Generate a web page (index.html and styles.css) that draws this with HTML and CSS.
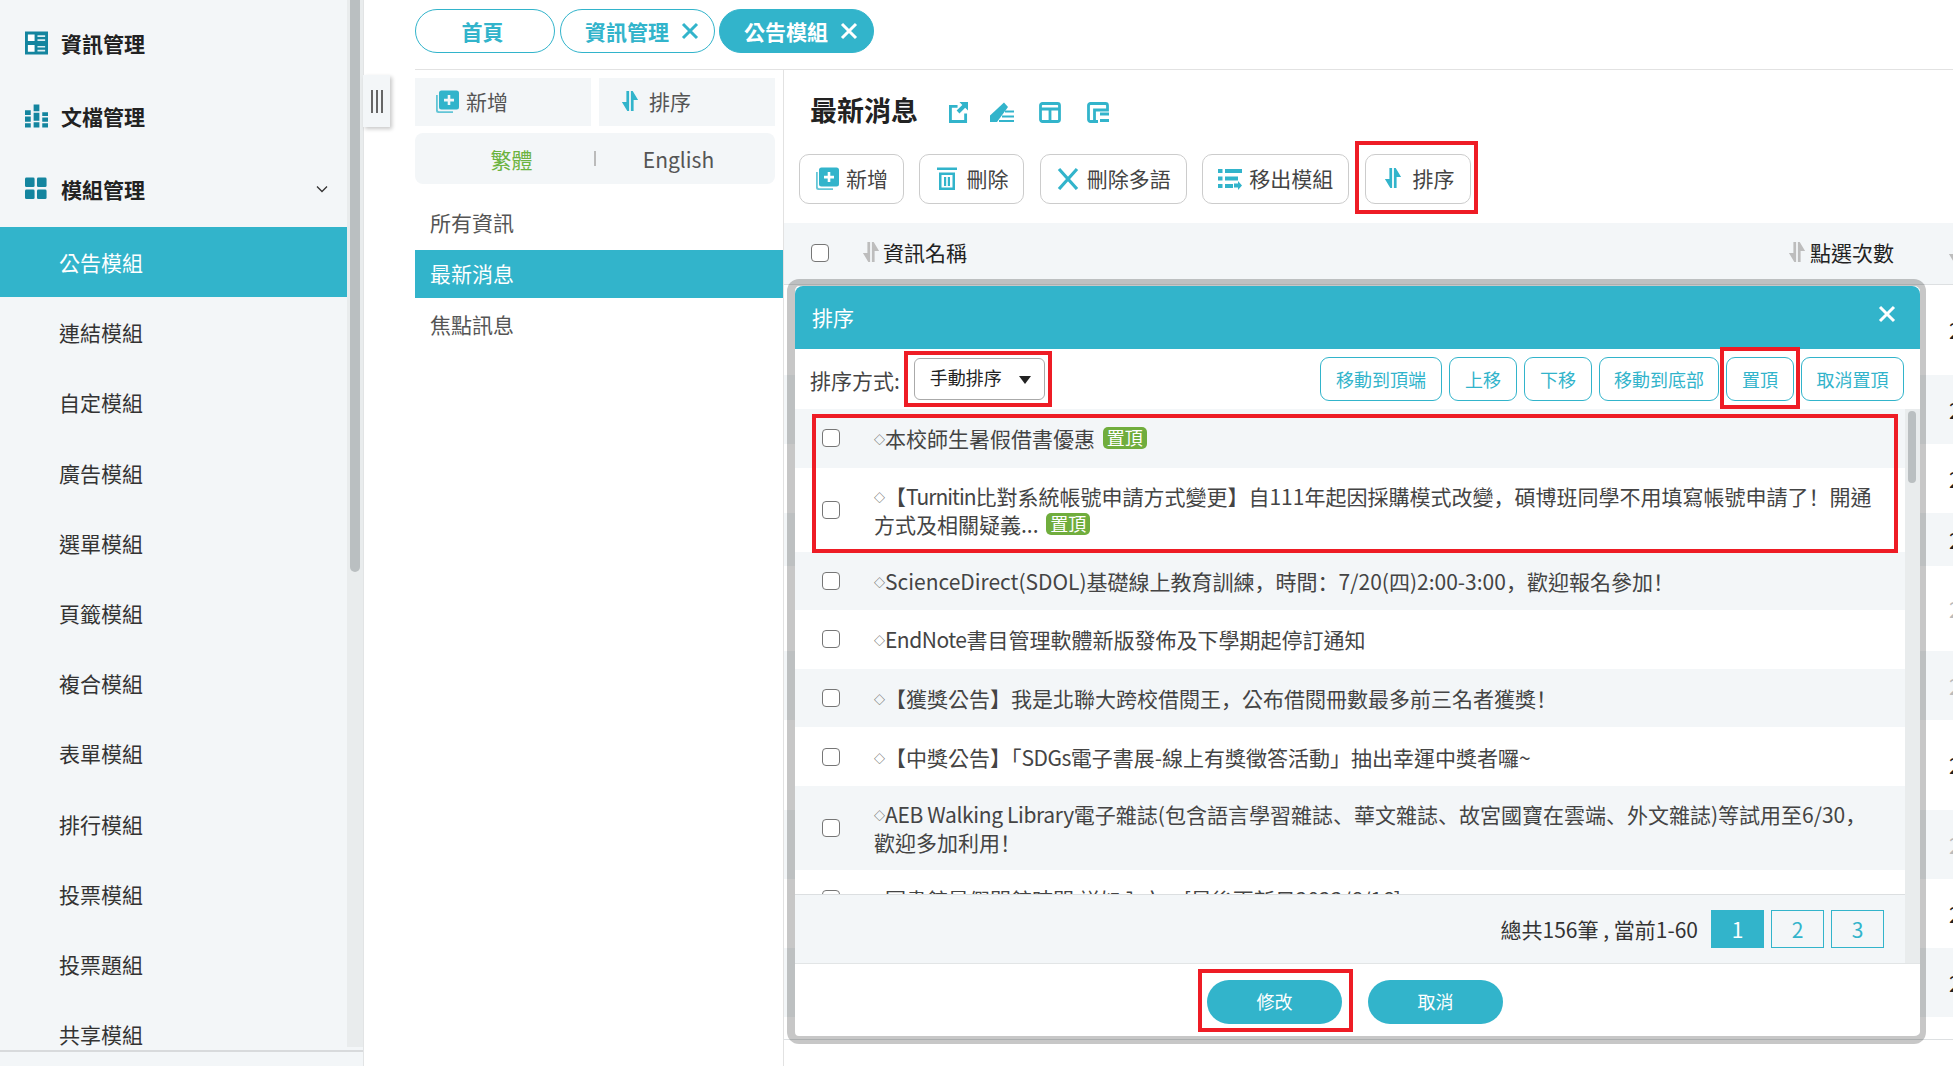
FILE: index.html
```html
<!DOCTYPE html>
<html lang="zh-Hant">

<head>
  <meta charset="UTF-8">
  <meta name="viewport" content="width=device-width, initial-scale=1.0">
  <title>最新消息</title>
  <link rel="stylesheet" href="styles.css">
</head>

<body>
  <svg class="defs" aria-hidden="true">
    <symbol id="i-sort" viewBox="0 0 20 24">
      <path d="M6 1h3v22H7L1 13h5zM11 1h2l6 10h-5v12h-3z" fill="currentColor" />
    </symbol>
    <symbol id="i-add" viewBox="0 0 24 24">
      <path d="M1 6v15.500A2.500 2.500 0 0 0 3.500 24H18v-1.800H4.200A1.400 1.400 0 0 1 2.800 21V6z" fill="currentColor" opacity=".75" />
      <path d="M6.500 1.500h15A2.500 2.500 0 0 1 24 4v14a2.500 2.500 0 0 1-2.500 2.500h-15A2.500 2.500 0 0 1 4 18V4a2.500 2.500 0 0 1 2.500-2.500zM12.700 6v3.800H9v2.600h3.700V16h2.600v-3.600H19V9.800h-3.700V6z" fill="currentColor" fill-rule="evenodd" />
    </symbol>
    <symbol id="i-x" viewBox="0 0 20 20">
      <path d="M3 3l14 14M17 3L3 17" fill="none" stroke="currentColor" stroke-width="3" />
    </symbol>
  </svg>

  <aside class="sidebar">
    <div class="side-body">
      <nav class="side-nav">
        <a class="side-top">
          <svg class="side-icon" viewBox="0 0 24 24"><path d="M0 0h24v24H0z" fill="#14859f" /><path d="M3 3h7v7H3zM3 14h7v7H3z" fill="#fff" /><path d="M13 4h8v1.800h-8zM13 8h8v1.800h-8zM13 15h8v1.800h-8zM13 19h8v1.800h-8z" fill="#dbeef2" /></svg>
          資訊管理
        </a>
        <a class="side-top">
          <svg class="side-icon" viewBox="0 0 24 24"><path d="M0 6h6v5H0zM0 12.500h6V18H0zM0 19.500h6V24H0zM9 0h6v7H9zM9 8.500h6V17H9zM9 18.500h6V24H9zM18 8h6v4h-6zM18 13.500h6V18h-6zM18 19.500h6V24h-6z" fill="#14859f" /></svg>
          文檔管理
        </a>
        <a class="side-top">
          <svg class="side-icon" viewBox="0 0 24 24"><rect x="0" y="0" width="10" height="10" rx="1.500" fill="#14859f" /><rect x="12.500" y="0" width="10" height="10" rx="1.500" fill="#14859f" /><rect x="0" y="12.500" width="10" height="10" rx="1.500" fill="#14859f" /><rect x="12.500" y="12.500" width="10" height="10" rx="1.500" fill="#14859f" /></svg>
          模組管理
          <svg class="chevron" viewBox="0 0 12 8"><path d="M1 1.500l5 5 5-5" fill="none" stroke="#333" stroke-width="1.300" /></svg>
        </a>
        <a class="side-sub active">公告模組</a>
        <a class="side-sub">連結模組</a>
        <a class="side-sub">自定模組</a>
        <a class="side-sub">廣告模組</a>
        <a class="side-sub">選單模組</a>
        <a class="side-sub">頁籤模組</a>
        <a class="side-sub">複合模組</a>
        <a class="side-sub">表單模組</a>
        <a class="side-sub">排行模組</a>
        <a class="side-sub">投票模組</a>
        <a class="side-sub">投票題組</a>
        <a class="side-sub">共享模組</a>
      </nav>
      <div class="side-track"><div class="side-thumb"></div></div>
    </div>
    <div class="side-foot"></div>
  </aside>

  <div class="collapse-handle"><span></span><span></span><span></span></div>

  <div class="content">
    <div class="tabs">
      <a class="tab tab-home">首頁</a>
      <a class="tab">資訊管理<svg class="tab-x"><use href="#i-x" /></svg></a>
      <a class="tab current">公告模組<svg class="tab-x"><use href="#i-x" /></svg></a>
    </div>

    <div class="work">
      <section class="left-panel">
        <div class="panel-actions">
          <a class="panel-btn"><svg class="ic"><use href="#i-add" /></svg>新增</a>
          <a class="panel-btn"><svg class="ic-sort"><use href="#i-sort" /></svg>排序</a>
        </div>
        <div class="lang-row">
          <a class="lang on">繁體</a>
          <i class="lang-sep"></i>
          <a class="lang">English</a>
        </div>
        <ul class="cat-list">
          <li>所有資訊</li>
          <li class="active">最新消息</li>
          <li>焦點訊息</li>
        </ul>
      </section>

      <main class="main">
        <div class="title-row">
          <h1>最新消息</h1>
          <svg class="title-icon ti-1" viewBox="0 0 20 22"><path d="M0 3h9v3H3v13h13v-7h3v10H0z" fill="#32b4cb" /><path d="M11 0h9v9l-3-3-6 6-3-3 6-6z" fill="#32b4cb" /></svg>
          <svg class="title-icon ti-2" viewBox="0 0 24 21"><path d="M14 .5L18 5 7 20H0v-6.500z" fill="#32b4cb" /><path d="M15 8.500h9v2h-9zM12 13.500h12v2H12zM9 18h15v2H9z" fill="#32b4cb" /></svg>
          <svg class="title-icon ti-3" viewBox="0 0 22 21"><rect x="1.500" y="1.500" width="19" height="18" rx="2" fill="none" stroke="#32b4cb" stroke-width="2.800" /><path d="M2 7h18M11 7v12" fill="none" stroke="#32b4cb" stroke-width="2.800" /></svg>
          <svg class="title-icon ti-4" viewBox="0 0 22 21"><path d="M11 19.500H3.500a2 2 0 0 1-2-2v-14a2 2 0 0 1 2-2h15a2 2 0 0 1 2 2V8H7.500v11.500" fill="none" stroke="#32b4cb" stroke-width="2.800" /><path d="M13 12h9M13 18.500h9" fill="none" stroke="#32b4cb" stroke-width="2.800" /></svg>
        </div>

        <div class="toolbar">
          <a class="tool-btn"><svg class="ic"><use href="#i-add" /></svg>新增</a>
          <a class="tool-btn">
            <svg class="ic" viewBox="0 0 24 24"><path d="M2 1.500h20v2.500H2zM4 6.500h16V24H4zM6.500 9v12.500h11V9zM9 11h2.200v9H9zM12.800 11H15v9h-2.200z" fill="#32b4cb" fill-rule="evenodd" /></svg>
            刪除
          </a>
          <a class="tool-btn"><svg class="ic" viewBox="0 0 24 24"><path d="M3 3l18 20M21 3L3 23" fill="none" stroke="#32b4cb" stroke-width="3.200" /></svg>刪除多語</a>
          <a class="tool-btn">
            <svg class="ic" viewBox="0 0 24 24"><path d="M0 3h4.500v4H0zM7 3h17v4H7zM0 10.500h4.500v4H0zM7 10.500h13v4H7zM0 18h4.500v4H0zM7 18h8v4H7z" fill="#32b4cb" /><path d="M16 17.500h4V15l4 4.500-4 4.500v-2.500h-4z" fill="#32b4cb" /></svg>
            移出模組
          </a>
          <a class="tool-btn"><svg class="ic-sort"><use href="#i-sort" /></svg>排序</a>
        </div>

        <div class="table-head">
          <input type="checkbox" class="check">
          <span class="th-name"><svg class="th-sort"><use href="#i-sort" /></svg>資訊名稱</span>
          <span class="th-click"><svg class="th-sort"><use href="#i-sort" /></svg>點選次數</span>
          <svg class="th-sort th-last"><use href="#i-sort" /></svg>
        </div>
        <div class="bg-row tall">2023/6/16</div>
        <div class="bg-row even">2023/6/16</div>
        <div class="bg-row">2023/6/16</div>
        <div class="bg-row even short">2023/6/16</div>
        <div class="bg-row mid pale">2023/6/16</div>
        <div class="bg-row even pale">2023/6/16</div>
        <div class="bg-row tall">2023/6/16</div>
        <div class="bg-row even pale">2023/6/16</div>
        <div class="bg-row">2023/6/16</div>
        <div class="bg-row even">2023/6/16</div>
        <div class="bg-row last"></div>

        <div class="modal">
          <div class="modal-head">
            <span class="modal-title">排序</span>
            <svg class="modal-close"><use href="#i-x" /></svg>
          </div>
          <div class="modal-tools">
            <label class="order-label">排序方式:</label>
            <div class="order-select">手動排序<i class="caret"></i></div>
            <div class="move-btns">
              <a class="move-btn w-122">移動到頂端</a>
              <a class="move-btn w-68">上移</a>
              <a class="move-btn w-68">下移</a>
              <a class="move-btn w-120">移動到底部</a>
              <a class="move-btn w-68">置頂</a>
              <a class="move-btn w-103">取消置頂</a>
            </div>
          </div>

          <div class="modal-body">
            <div class="list-wrap">
              <div class="sort-list">
                <div class="sort-row">
                  <input type="checkbox" class="check">
                  <p><span class="dia">◇</span>本校師生暑假借書優惠 <b class="pin">置頂</b></p>
                </div>
                <div class="sort-row">
                  <input type="checkbox" class="check">
                  <p><span class="dia">◇</span>【<span class="tight-1">Turnitin</span>比對系統帳號申請方式變更】自111年起因採購模式改變<span class="punct" lang="zh-Hans">，</span>碩博班同學不用填寫帳號申請了<span class="punct" lang="zh-Hans">！</span>開通方式及相關疑義... <b class="pin">置頂</b></p>
                </div>
                <div class="sort-row">
                  <input type="checkbox" class="check">
                  <p><span class="dia">◇</span>ScienceDirect(SDOL)基礎線上教育訓練<span class="punct" lang="zh-Hans">，</span>時間<span class="punct" lang="zh-Hans">：</span>7/20(四)2:00-3:00<span class="punct" lang="zh-Hans">，</span>歡迎報名參加<span class="punct" lang="zh-Hans">！</span></p>
                </div>
                <div class="sort-row">
                  <input type="checkbox" class="check">
                  <p><span class="dia">◇</span><span class="tight-2">EndNote</span>書目管理軟體新版發佈及下學期起停訂通知</p>
                </div>
                <div class="sort-row">
                  <input type="checkbox" class="check">
                  <p><span class="dia">◇</span>【獲獎公告】我是北聯大跨校借閱王<span class="punct" lang="zh-Hans">，</span>公布借閱冊數最多前三名者獲獎<span class="punct" lang="zh-Hans">！</span></p>
                </div>
                <div class="sort-row">
                  <input type="checkbox" class="check">
                  <p><span class="dia">◇</span>【中獎公告】「<span class="tight-2">SDGs</span>電子書展-線上有獎徵答活動」抽出幸運中獎者囉~</p>
                </div>
                <div class="sort-row">
                  <input type="checkbox" class="check">
                  <p><span class="dia">◇</span><span class="tight-3">AEB Walking Library</span>電子雜誌(包含語言學習雜誌<span class="punct" lang="zh-Hans">、</span>華文雜誌<span class="punct" lang="zh-Hans">、</span>故宮國寶在雲端<span class="punct" lang="zh-Hans">、</span>外文雜誌)等試用至6/30<span class="punct" lang="zh-Hans">，</span>歡迎多加利用<span class="punct" lang="zh-Hans">！</span></p>
                </div>
                <div class="sort-row">
                  <input type="checkbox" class="check">
                  <p><span class="dia">◇</span>圖書館暑假開館時間 詳如內文。[最後更新日2023/6/16]</p>
                </div>
              </div>
              <div class="pager">
                <span class="pager-text">總共156筆 , 當前1-60</span>
                <a class="page on">1</a>
                <a class="page">2</a>
                <a class="page">3</a>
              </div>
            </div>
            <div class="list-track"><div class="list-thumb"></div></div>
          </div>

          <div class="modal-foot">
            <a class="pill-btn">修改</a>
            <a class="pill-btn">取消</a>
          </div>
        </div>
      </main>
    </div>
  </div>

  <!-- red boxes drawn on top of the screenshot -->
  <div class="mark mark-sort"></div>
  <div class="mark mark-select"></div>
  <div class="mark mark-pin"></div>
  <div class="mark mark-rows"></div>
  <div class="mark mark-save"></div>
</body>

</html>
```
FILE: styles.css
```css
* {
  box-sizing: border-box;
}

html,
body {
  margin: 0;
  padding: 0;
  height: 1066px;
  overflow: hidden;
}

body {
  position: relative;
  display: flex;
  background-color: #fff;
  color: #333;
  font-family: "Noto Sans CJK TC", "Noto Sans", sans-serif;
  font-size: 21px;
}

.defs {
  position: absolute;
  width: 0;
  height: 0;
}

/* sidebar */
.sidebar {
  width: 364px;
  flex-shrink: 0;
  background-color: #f3f6f8;
  border-right: 1px solid #e2e4e5;
}

.side-body {
  display: flex;
  height: 1047px;
}

.side-nav {
  width: 347px;
  padding-top: 6px;
  overflow: hidden;
}

.side-top {
  display: flex;
  align-items: center;
  height: 73px;
  padding-left: 25px;
  font-weight: bold;
  color: #222;
}

.side-top:nth-child(3) {
  margin-bottom: 2px;
}

.side-icon {
  width: 23px;
  height: 24px;
  margin-right: 13px;
}

.chevron {
  width: 12px;
  height: 8px;
  margin-left: auto;
  margin-right: 19px;
}

.side-sub {
  display: flex;
  align-items: center;
  height: 70.2px;
  padding-left: 59px;
  color: #333;
}

.side-sub.active {
  background-color: #32b4cb;
  color: #fff;
}

.side-track {
  width: 16px;
  background-color: #e9eced;
  padding: 0 3px;
}

.side-thumb {
  width: 10px;
  height: 572px;
  background-color: #babfc1;
  border-radius: 0 0 5px 5px;
}

.side-foot {
  height: 2px;
  margin-top: 3px;
  background-color: #d8dadc;
}

.collapse-handle {
  position: absolute;
  left: 363px;
  top: 75px;
  width: 27px;
  height: 52px;
  display: flex;
  justify-content: center;
  align-items: center;
  gap: 3px;
  background-color: #f3f6f8;
  box-shadow: 2px 2px 4px rgba(0, 0, 0, 0.22);
}

.collapse-handle span {
  width: 2px;
  height: 23px;
  background-color: #666;
}

/* tabs */
.content {
  flex: 1;
  min-width: 0;
  padding-left: 51px;
}

.tabs {
  display: flex;
  gap: 5px;
  height: 70px;
  padding-top: 9px;
  border-bottom: 1px solid #e2e2e2;
}

.tab {
  display: flex;
  align-items: center;
  gap: 11px;
  width: 155px;
  height: 44px;
  padding-left: 24px;
  border: 1px solid #32b4cb;
  border-radius: 22px;
  color: #32b4cb;
  font-weight: bold;
}

.tab.current {
  margin-left: -1px;
}

.tab-home {
  width: 140px;
  justify-content: center;
  padding-left: 0;
  padding-right: 5px;
}

.tab.current {
  background-color: #32b4cb;
  color: #fff;
}

.tab-x {
  width: 20px;
  height: 20px;
}

/* left panel */
.work {
  display: flex;
  height: 996px;
}

.left-panel {
  width: 369px;
  flex-shrink: 0;
  padding-top: 8px;
  border-right: 1px solid #e2e2e2;
}

.panel-actions {
  display: flex;
  gap: 8px;
  width: 360px;
}

.panel-btn {
  display: flex;
  align-items: center;
  gap: 7px;
  flex: 1;
  height: 48px;
  padding: 0 0 2px 20px;
  background-color: #f3f6f8;
  color: #555;
}

.panel-btn .ic-sort {
  margin: 0 3px 0 2px;
}

.ic {
  width: 24px;
  height: 24px;
  flex-shrink: 0;
  color: #32b4cb;
}

.ic-sort {
  width: 18px;
  height: 22px;
  flex-shrink: 0;
  color: #32b4cb;
}

.lang-row {
  display: flex;
  align-items: center;
  width: 360px;
  height: 51px;
  margin-top: 7px;
  padding: 0 14px;
  background-color: #f3f6f8;
  border-radius: 8px;
}

.lang {
  flex: 1;
  text-align: center;
  color: #555;
}

.lang.on {
  color: #6cb33f;
}

.lang-sep {
  width: 2px;
  height: 15px;
  background-color: #bbb;
}

.cat-list {
  list-style: none;
  margin: 14px 0 0;
  padding: 0;
}

.cat-list li {
  display: flex;
  align-items: center;
  height: 48px;
  margin-bottom: 2px;
  padding-left: 15px;
  color: #555;
}

.cat-list li:first-child {
  margin-bottom: 4px;
}

.cat-list li.active {
  padding-bottom: 2px;
  background-color: #32b4cb;
  color: #fff;
}

/* main */
.main {
  position: relative;
  flex: 1;
  min-width: 0;
  overflow: hidden;
}

.title-row {
  display: flex;
  align-items: center;
  height: 76px;
  padding: 2px 0 0 26px;
}

.title-row h1 {
  margin: 0 31px 0 0;
  font-size: 27px;
  font-weight: bold;
  color: #222;
}

.title-icon {
  height: 21px;
  margin-top: 6px;
}

.ti-1 {
  width: 19px;
  margin-right: 22px;
}

.ti-2 {
  width: 24px;
  margin-right: 25px;
}

.ti-3 {
  width: 22px;
  margin-right: 26px;
}

.ti-4 {
  width: 22px;
}

.toolbar {
  display: flex;
  gap: 15.4px;
  padding: 8px 0 0 15px;
}

.tool-btn {
  display: flex;
  align-items: center;
  gap: 7px;
  height: 50px;
  padding: 0 15px 2px;
  border: 1px solid #ccc;
  border-radius: 10px;
  color: #444;
}

.tool-btn .ic-sort {
  margin: 0 4px 0 3px;
}

.table-head {
  display: flex;
  align-items: center;
  height: 62px;
  margin-top: 19px;
  padding: 0 0 2px 27px;
  background-color: #f3f6f8;
  border-bottom: 1px solid #dde0e2;
  color: #222;
}

.check {
  appearance: none;
  flex-shrink: 0;
  width: 18px;
  height: 18px;
  margin: 0;
  background-color: #fff;
  border: 1.5px solid #767676;
  border-radius: 4px;
}

.th-name {
  display: flex;
  align-items: center;
  gap: 3px;
  margin-left: 33px;
  flex: 1;
  padding-bottom: 2px;
}

.th-click {
  display: flex;
  align-items: center;
  gap: 4px;
  padding-bottom: 2px;
}

.th-sort {
  flex-shrink: 0;
  width: 18px;
  height: 22px;
  color: #bdbdbd;
}

.th-last {
  margin-left: 54px;
  margin-right: -13px;
}

.bg-row {
  display: flex;
  align-items: center;
  justify-content: flex-start;
  height: 69px;
  padding-left: 1165px;
  color: #222;
  white-space: nowrap;
}

.bg-row.even {
  background-color: #f3f6f8;
}

.bg-row.tall {
  height: 90px;
}

.bg-row.short {
  height: 53px;
}

.bg-row.mid {
  height: 85px;
}

.bg-row.pale {
  color: #bbb;
}

.bg-row.last {
  height: 23px;
  border-bottom: 1px solid #dde0e2;
}

/* sort dialog */
.modal {
  position: absolute;
  left: 3px;
  top: 209px;
  width: 1139px;
  height: 765px;
  display: flex;
  flex-direction: column;
  background-color: #fff;
  background-clip: padding-box;
  border-style: solid;
  border-color: rgba(0, 0, 0, 0.22);
  border-width: 7px 6px 8px 8px;
  border-radius: 12px;
  overflow: hidden;
}

.modal-head {
  display: flex;
  align-items: center;
  justify-content: space-between;
  flex-shrink: 0;
  height: 63px;
  padding: 0 23px 0 17px;
  background-color: #32b4cb;
  border-radius: 8px 8px 0 0;
  color: #fff;
}

.modal-title {
  margin-bottom: 2px;
}

.modal-close {
  width: 20px;
  height: 20px;
  margin-bottom: 7px;
}

.modal-tools {
  display: flex;
  align-items: center;
  flex-shrink: 0;
  height: 60px;
  padding: 0 16px 0 15px;
}

.order-label {
  color: #444;
  margin-top: 2px;
}

.order-select {
  display: flex;
  align-items: center;
  justify-content: space-between;
  width: 131px;
  height: 42px;
  margin-left: 14px;
  padding: 0 13px 4px 15px;
  border: 1px solid #aaa;
  border-radius: 6px;
  font-size: 18px;
  color: #222;
}

.caret {
  width: 0;
  height: 0;
  margin-top: 6px;
  border-left: 6px solid transparent;
  border-right: 6px solid transparent;
  border-top: 8px solid #222;
}

.move-btns {
  display: flex;
  gap: 7px;
  margin-left: auto;
}

.move-btn {
  display: flex;
  align-items: center;
  justify-content: center;
  height: 44px;
  border: 1px solid #32b4cb;
  border-radius: 9px;
  color: #32b4cb;
  font-size: 18px;
}

.w-68 {
  width: 68px;
}

.w-103 {
  width: 103px;
}

.w-120 {
  width: 120px;
}

.w-122 {
  width: 122px;
}

.modal-body {
  display: flex;
  flex-shrink: 0;
  height: 554px;
}

.list-wrap {
  display: flex;
  flex-direction: column;
  width: 1110px;
}

.sort-list {
  height: 485px;
  overflow: hidden;
}

.sort-row {
  display: flex;
  align-items: center;
  min-height: 58.6px;
  padding: 14px 20px 14px 27px;
}

.sort-row:nth-child(odd) {
  background-color: #f3f6f8;
}

.sort-row p {
  margin: 0 0 0 34px;
  line-height: 28px;
  color: #444;
}

.dia {
  font-size: 11px;
  line-height: 1;
  vertical-align: 3px;
}

/* comma and exclamation sit low-left in the reference */
.punct {
  font-family: "Noto Sans CJK SC", sans-serif;
}

/* latin words run narrower in the reference */
.tight-1 {
  letter-spacing: -1px;
}

.tight-2 {
  letter-spacing: -0.5px;
}

.tight-3 {
  letter-spacing: -0.35px;
}

.pin {
  display: inline-block;
  width: 44px;
  height: 22px;
  margin-left: 3px;
  margin-top: 3px;
  line-height: 21px;
  text-align: center;
  background-color: #70ad3d;
  border-radius: 5px;
  color: #fff;
  font-size: 18px;
  font-weight: normal;
  vertical-align: top;
}

.pager {
  display: flex;
  align-items: center;
  justify-content: flex-end;
  gap: 7px;
  flex: 1;
  padding-right: 21px;
  background-color: #f3f6f8;
  border-top: 1px solid #dcdfe1;
}

.pager-text {
  margin-right: 6px;
  color: #333;
}

.page {
  display: flex;
  align-items: center;
  justify-content: center;
  width: 53px;
  height: 38px;
  border: 1px solid #32b4cb;
  color: #32b4cb;
}

.page.on {
  background-color: #32b4cb;
  color: #fff;
}

.list-track {
  width: 15px;
  padding: 2px 4px 0 3px;
  background-color: #e9eced;
}

.list-thumb {
  width: 8px;
  height: 72px;
  background-color: #babfc1;
  border-radius: 4px;
}

.modal-foot {
  display: flex;
  justify-content: center;
  gap: 26px;
  flex: 1;
  padding: 16px 5px 0 0;
  border-top: 1px solid #e2e5e6;
}

.pill-btn {
  display: flex;
  align-items: center;
  justify-content: center;
  width: 135px;
  height: 44px;
  padding-bottom: 2px;
  background-color: #32b4cb;
  border-radius: 22px;
  color: #fff;
  font-size: 18px;
}

/* red boxes */
.mark {
  position: absolute;
  border: 4px solid #ee1c25;
}

.mark-sort {
  left: 1355px;
  top: 141px;
  width: 123px;
  height: 73px;
}

.mark-select {
  left: 904px;
  top: 351px;
  width: 148px;
  height: 56px;
}

.mark-pin {
  left: 1720px;
  top: 347px;
  width: 80px;
  height: 62px;
}

.mark-rows {
  left: 812px;
  top: 414px;
  width: 1086px;
  height: 139px;
}

.mark-save {
  left: 1198px;
  top: 969px;
  width: 155px;
  height: 63px;
}
```
